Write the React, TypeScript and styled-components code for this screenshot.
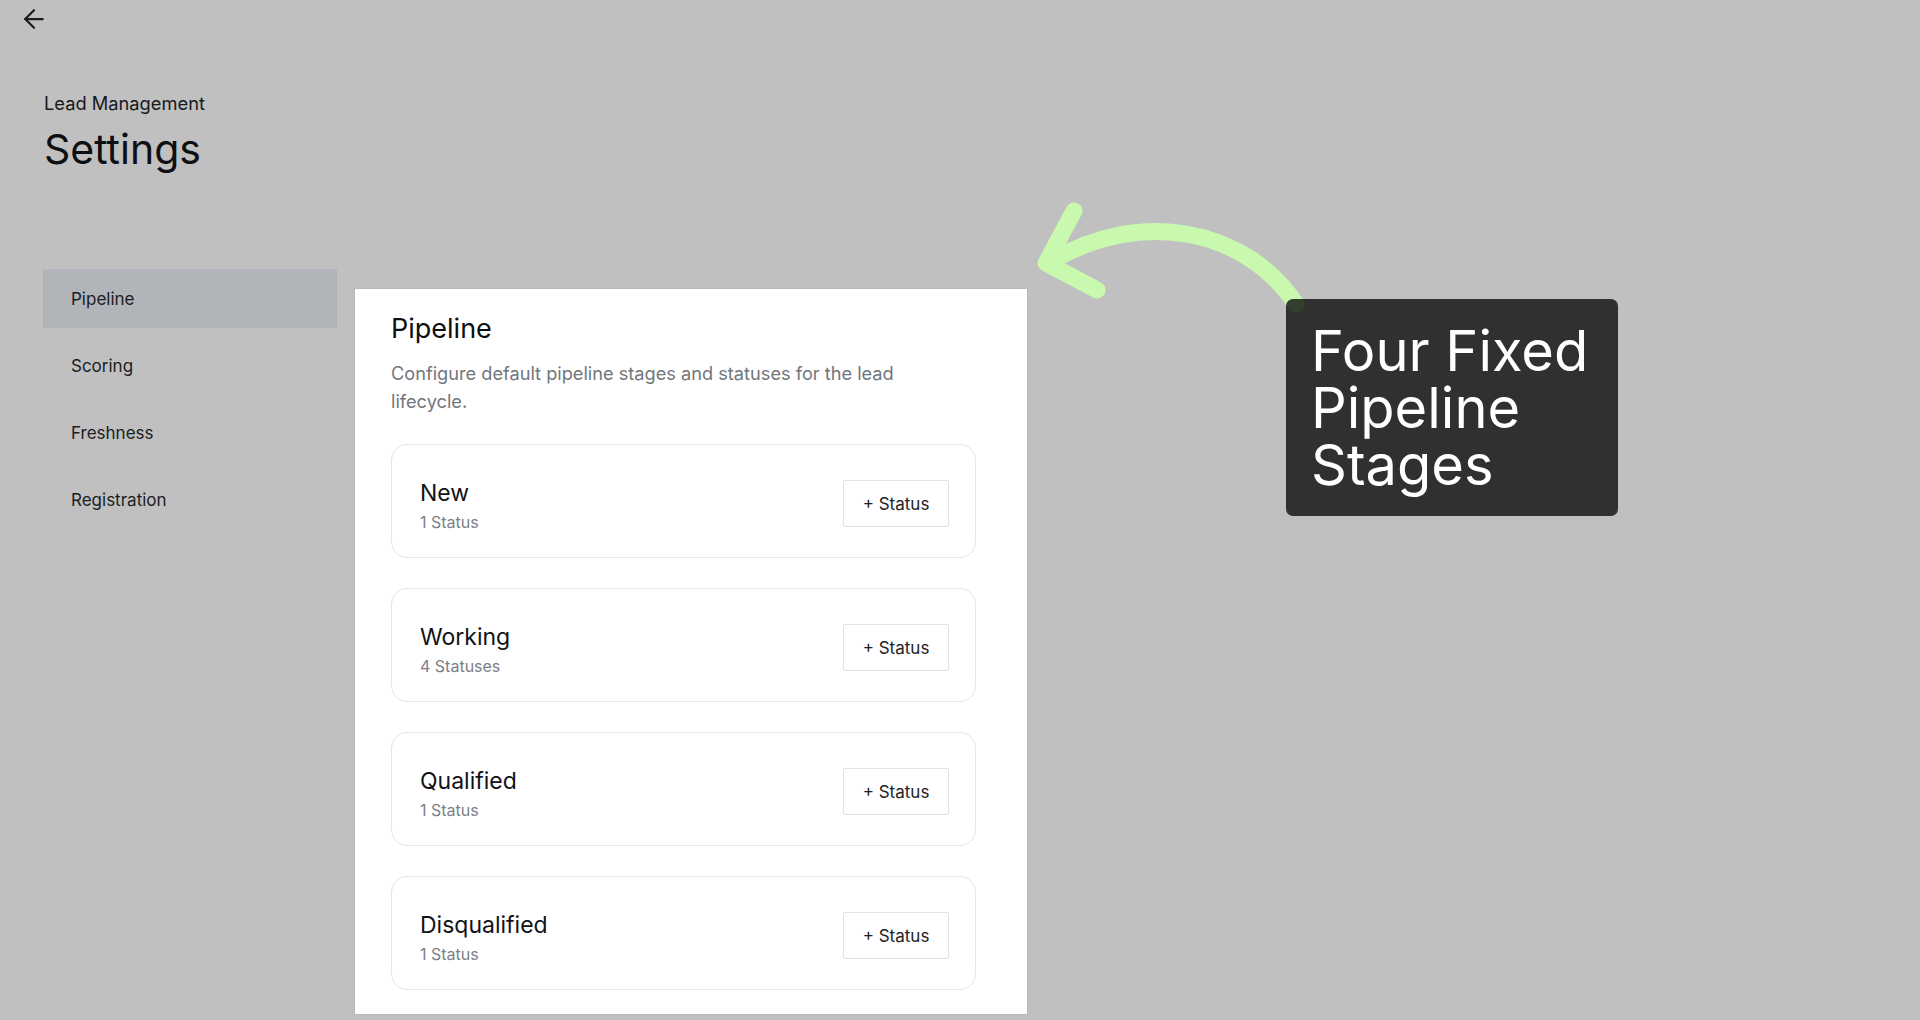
import styled, { createGlobalStyle } from "styled-components";
import { ArrowLeft } from "lucide-react";

const GlobalStyle = createGlobalStyle`
  * {
    box-sizing: border-box;
  }
  body {
    margin: 0;
    background: #c0c0c0;
    font-family: Inter, "Noto Sans", "Liberation Sans", sans-serif;
    color: #16181c;
  }
`;

const Page = styled.div`
  position: relative;
  min-height: 100vh;
`;

const TopBar = styled.div`
  height: 38px;
  padding-left: 19px;
  display: flex;
  align-items: center;
`;

const BackButton = styled.button`
  width: 30px;
  height: 30px;
  padding: 0;
  border: none;
  background: transparent;
  color: #1c1d20;
  display: flex;
  cursor: pointer;
`;

const Header = styled.header`
  padding: 53px 0 0 44px;
`;

const Eyebrow = styled.div`
  font-size: 18.3px;
  line-height: 24px;
  color: #16181c;
`;

const PageTitle = styled.h1`
  margin: 9px 0 0;
  font-size: 41px;
  line-height: 50px;
  font-weight: 400;
  color: #0e0f12;
`;

const Main = styled.div`
  display: flex;
  align-items: flex-start;
  gap: 18px;
  margin-top: 95px;
  padding-left: 43px;
`;

const Sidebar = styled.nav`
  width: 294px;
  display: flex;
  flex-direction: column;
  gap: 8px;
`;

const NavItem = styled.div<{ $active?: boolean }>`
  height: 59px;
  padding-left: 28px;
  display: flex;
  align-items: center;
  font-size: 17px;
  color: #1b1d22;
  background: ${(p) => (p.$active ? "#b1b4b9" : "transparent")};
`;

const Card = styled.section`
  width: 672px;
  margin-top: 20px;
  padding: 23px 51px 24px 36px;
  background: #ffffff;
  box-shadow: 0 0 0 1px rgba(0, 0, 0, 0.04);
`;

const CardTitle = styled.h2`
  margin: 0;
  font-size: 27px;
  line-height: 33px;
  font-weight: 400;
  color: #0e0f12;
`;

const Description = styled.p`
  margin: 14px 0 0;
  max-width: 560px;
  font-size: 18.2px;
  line-height: 28px;
  color: #72767d;
`;

const StageList = styled.div`
  margin-top: 29px;
  display: flex;
  flex-direction: column;
  gap: 30px;
`;

const StageCard = styled.div`
  height: 114px;
  padding: 9px 26px 0 28px;
  border: 1px solid #e4e6ea;
  border-radius: 16px;
  display: flex;
  align-items: center;
  justify-content: space-between;
`;

const StageName = styled.div`
  font-size: 23px;
  line-height: 28px;
  color: #111216;
`;

const StageCount = styled.div`
  margin-top: 5px;
  font-size: 16px;
  line-height: 20px;
  color: #7c8087;
`;

const StatusButton = styled.button`
  width: 106px;
  height: 47px;
  margin-top: -4px;
  border: 1px solid #e2e3e5;
  border-radius: 2px;
  background: #ffffff;
  font-family: inherit;
  font-size: 17px;
  color: #1d2127;
  cursor: pointer;
`;

const Annotation = styled.svg`
  position: absolute;
  left: 0;
  top: 0;
  pointer-events: none;
`;

const Callout = styled.div`
  position: absolute;
  left: 1286px;
  top: 299px;
  width: 332px;
  padding: 24px 25px 22px;
  border-radius: 7px;
  background: rgba(0, 0, 0, 0.75);
  color: #ffffff;
  font-size: 56px;
  line-height: 57px;
  white-space: nowrap;
`;

const stages = [
  { name: "New", count: "1 Status" },
  { name: "Working", count: "4 Statuses" },
  { name: "Qualified", count: "1 Status" },
  { name: "Disqualified", count: "1 Status" },
];

const navItems = ["Pipeline", "Scoring", "Freshness", "Registration"];

export default function App() {
  return (
    <Page>
      <GlobalStyle />
      <TopBar>
        <BackButton aria-label="Back">
          <ArrowLeft size={30} strokeWidth={1.8} />
        </BackButton>
      </TopBar>
      <Header>
        <Eyebrow>Lead Management</Eyebrow>
        <PageTitle>Settings</PageTitle>
      </Header>
      <Main>
        <Sidebar>
          {navItems.map((item) => (
            <NavItem key={item} $active={item === "Pipeline"}>
              {item}
            </NavItem>
          ))}
        </Sidebar>
        <Card>
          <CardTitle>Pipeline</CardTitle>
          <Description>
            Configure default pipeline stages and statuses for the lead lifecycle.
          </Description>
          <StageList>
            {stages.map((s) => (
              <StageCard key={s.name}>
                <div>
                  <StageName>{s.name}</StageName>
                  <StageCount>{s.count}</StageCount>
                </div>
                <StatusButton>+ Status</StatusButton>
              </StageCard>
            ))}
          </StageList>
        </Card>
      </Main>
      <Annotation width="1920" height="1020" viewBox="0 0 1920 1020">
        <g
          fill="none"
          stroke="#c8f9ae"
          strokeWidth="17"
          strokeLinecap="round"
          strokeLinejoin="round"
        >
          <path d="M1296 304 C1245 228 1140 208 1050 262" />
          <path d="M1074 211 L1046 263 L1097 290" />
        </g>
      </Annotation>
      <Callout>
        Four Fixed
        <br />
        Pipeline
        <br />
        Stages
      </Callout>
    </Page>
  );
}
